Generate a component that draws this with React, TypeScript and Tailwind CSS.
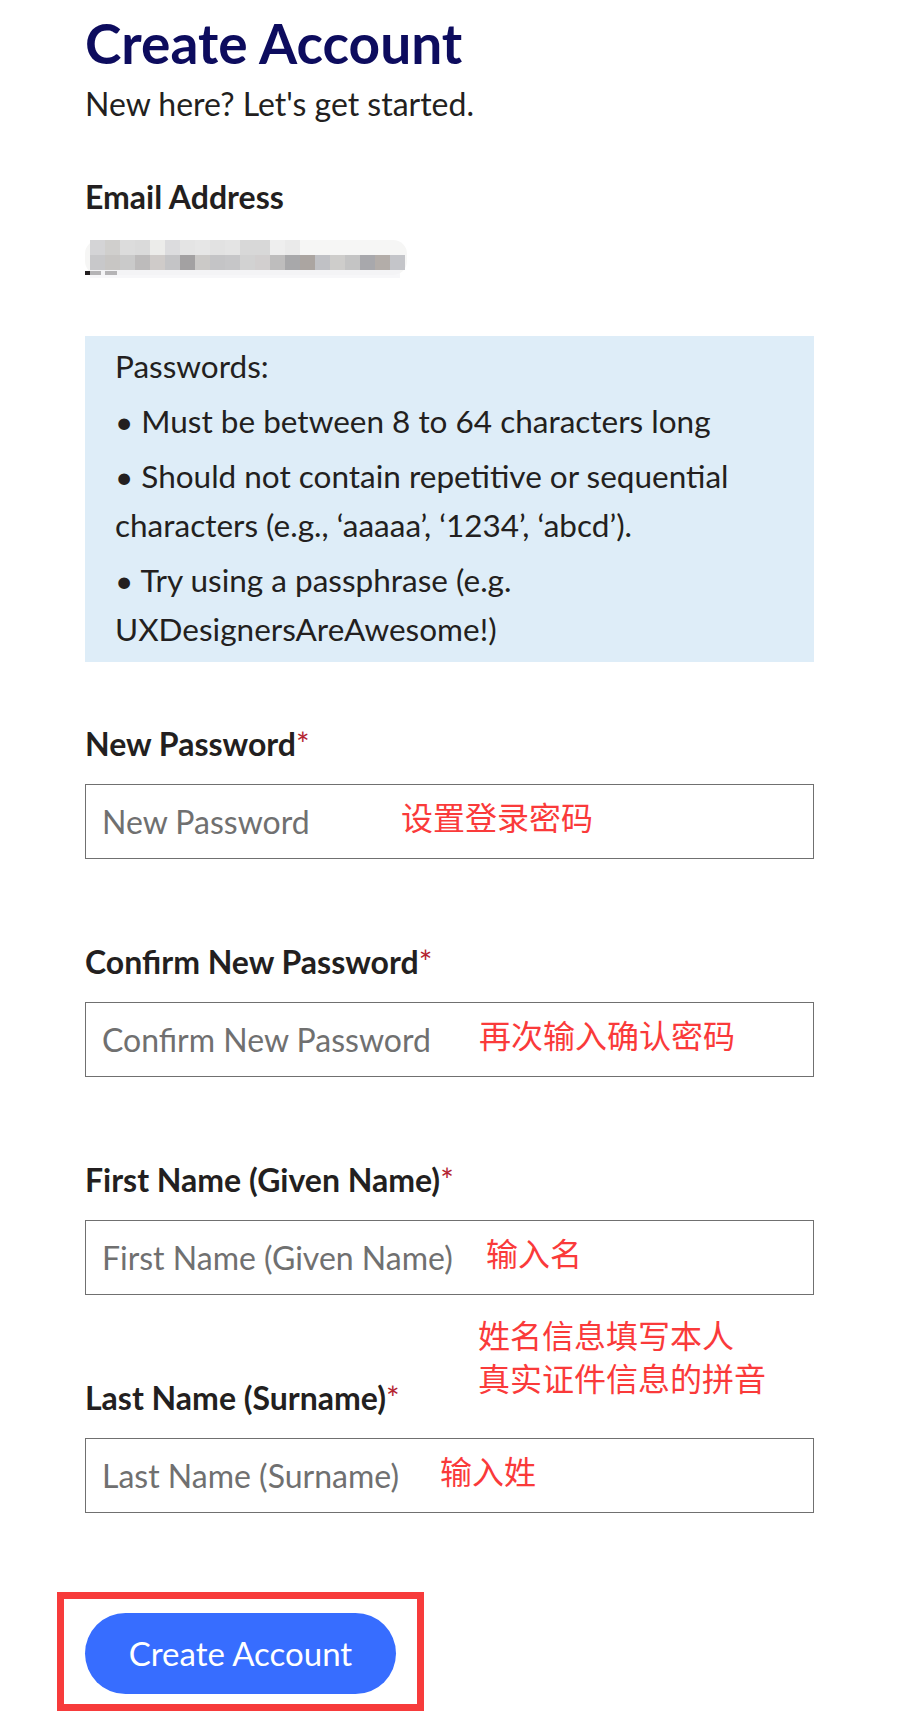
import React from "react";

const FONT = { fontFamily: '"Lato", "Noto Sans CJK SC", sans-serif' };

const BLUR_TOP = ["#d4d4d6", "#d0cfcd", "#dcdcdc", "#dadada", "#ececea", "#dcdcde", "#e4e4e4", "#e6e6e6", "#e2e2e2", "#e4e4e4", "#d8d8d8", "#d8d8d8", "#eeeeee", "#eaeaea"];
const BLUR_BOTTOM = ["#c8c8ca", "#c8c6c4", "#cacaca", "#bdbbbb", "#cfcbc9", "#c4c4c6", "#a3a1a2", "#cbc9c7", "#c4c4c6", "#c6c6c8", "#d2d2d2", "#d2cfcf", "#bebdbd", "#a8a8aa", "#aba5a1", "#c0c1c5", "#cecdcb", "#c4c4c4", "#a8a8ac", "#b3ada9", "#c4c5c9"];

function BlurredEmail() {
  return (
    <svg width="340" height="45" viewBox="0 0 340 45" className="block">
      <rect x="0" y="0" width="322" height="35" rx="14" fill="#f6f6f5" />
      <rect x="0" y="31" width="16" height="4" fill="#231f20" />
      <rect x="20" y="31" width="12" height="4" fill="#231f20" />
      {BLUR_TOP.map((c, i) => (
        <rect key={"t" + i} x={5 + i * 15} y="0" width="15" height="15" fill={c} />
      ))}
      {BLUR_BOTTOM.map((c, i) => (
        <rect key={"b" + i} x={5 + i * 15} y="15" width="15" height="15" fill={c} />
      ))}
      <rect x="5" y="30" width="310" height="8" fill="#f4f4f6" opacity="0.7" />
    </svg>
  );
}

function Field({ label, placeholder, note, noteLeft }: { label: string; placeholder: string; note: string; noteLeft: string }) {
  return (
    <div className="relative">
      <label className="block text-[32px] leading-[38px] font-bold text-[#231f20]">
        {label}
        <span className="text-[#b4232f] font-normal">*</span>
      </label>
      <div className="relative mt-[21px] h-[75px] border border-[#707070] bg-white">
        <input
          type="text"
          placeholder={placeholder}
          className="w-full h-full px-[16px] text-[32px] text-[#231f20] placeholder:text-[#707070] outline-none bg-transparent"
          style={FONT}
        />
        <span className={`absolute top-[13px] text-[32px] leading-[40px] text-[#fa3a3a] pointer-events-none ${noteLeft}`}>
          {note}
        </span>
      </div>
    </div>
  );
}

export default function App() {
  return (
    <div className="min-h-screen bg-white" style={FONT}>
      <div className="ml-[85px] w-[729px] pt-[10px] pb-[17px]">
        <h1 className="text-[55px] leading-[66px] font-bold text-[#0d0c5e]">Create Account</h1>
        <p className="mt-[9px] text-[32px] leading-[38px] text-[#231f20]">New here? Let's get started.</p>

        <div className="mt-[55px] text-[32px] leading-[38px] font-bold text-[#231f20]">Email Address</div>
        <div className="mt-[24px]">
          <BlurredEmail />
        </div>

        <div className="mt-[51px] bg-[#deedf8] pl-[30px] pr-[24px] pt-[6px] pb-[8px] text-[31.5px] leading-[49px] text-[#231f20]">
          <p>Passwords:</p>
          <p className="mt-[6px]">• Must be between 8 to 64 characters long</p>
          <p className="mt-[6px]">• Should not contain repetitive or sequential characters (e.g., ‘aaaaa’, ‘1234’, ‘abcd’).</p>
          <p className="mt-[6px]">• Try using a passphrase (e.g. UXDesignersAreAwesome!)</p>
        </div>

        <div className="mt-[63px] flex flex-col gap-[84px]">
          <Field label="New Password" placeholder="New Password" note="设置登录密码" noteLeft="left-[315px]" />
          <Field label="Confirm New Password" placeholder="Confirm New Password" note="再次输入确认密码" noteLeft="left-[393px]" />
          <Field label="First Name (Given Name)" placeholder="First Name (Given Name)" note="输入名" noteLeft="left-[400px]" />
          <div className="relative">
            <div className="absolute top-[-65px] left-[393px] text-[32px] leading-[43px] text-[#fa3a3a]">
              <div>姓名信息填写本人</div>
              <div>真实证件信息的拼音</div>
            </div>
            <Field label="Last Name (Surname)" placeholder="Last Name (Surname)" note="输入姓" noteLeft="left-[354px]" />
          </div>
        </div>

        <div className="mt-[79px] -ml-[28px] w-fit border-[7px] border-[#f73b3b] px-[21px] pt-[14px] pb-[10px]">
          <button className="w-[311px] h-[81px] rounded-full bg-[#376dff] text-white text-[33px]" style={FONT}>
            Create Account
          </button>
        </div>
      </div>
    </div>
  );
}
